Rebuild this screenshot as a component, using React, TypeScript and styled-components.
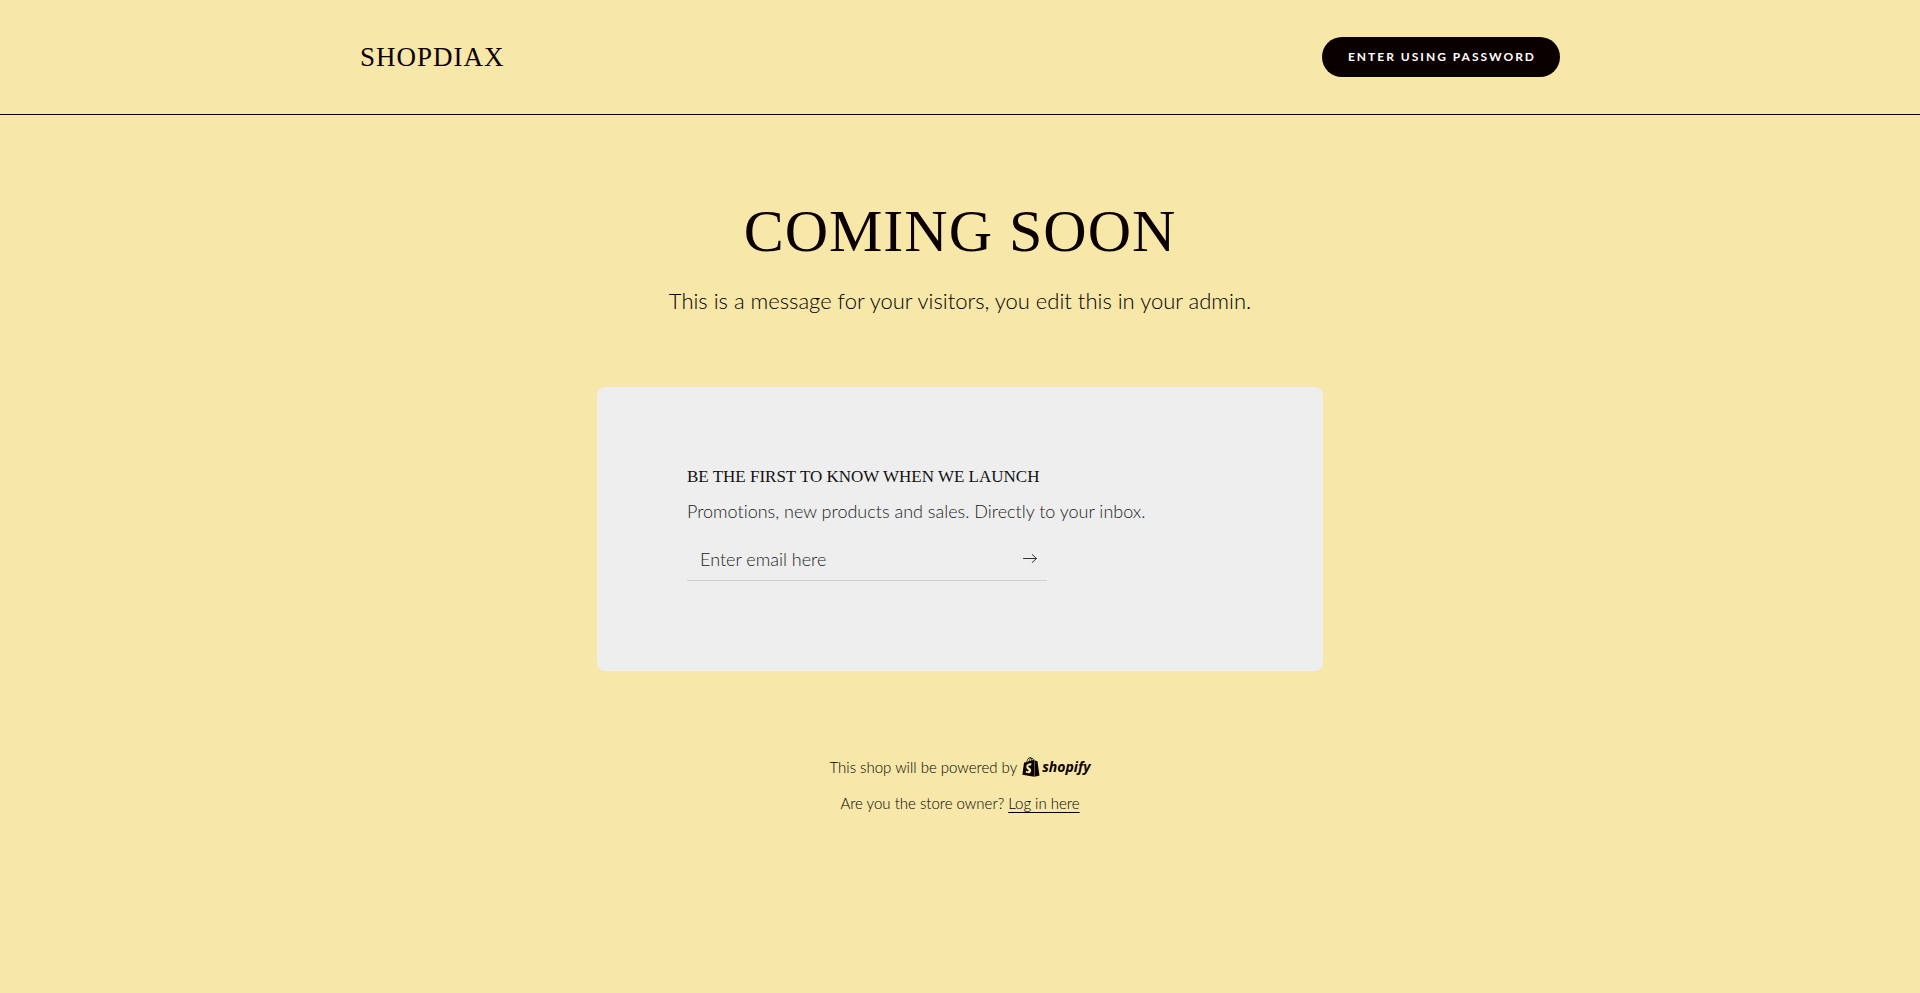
import React from "react";
import styled, { createGlobalStyle } from "styled-components";
import { FaShopify } from "react-icons/fa";

const ink = "#0a0000";
const sand = "#f7e7a9";
const sans = `"Lato", "Liberation Sans", sans-serif`;
const serif = `"Liberation Serif", "Times New Roman", serif`;

const GlobalStyle = createGlobalStyle`
  *, *::before, *::after { box-sizing: border-box; }
  html { background: ${sand}; }
  body {
    margin: 0;
    color: ${ink};
    font-family: ${sans};
    font-size: 18px;
    font-weight: 300;
    font-variant-ligatures: none;
  }
`;

const Header = styled.header`
  border-bottom: 1px solid ${ink};
`;

const HeaderInner = styled.div`
  display: flex;
  align-items: center;
  justify-content: space-between;
  max-width: 1200px;
  min-height: 114px;
  margin: 0 auto;
`;

const Brand = styled.span`
  font-family: ${serif};
  font-size: 27px;
  font-weight: 400;
  line-height: 32px;
  letter-spacing: 1px;
`;

const PasswordButton = styled.button`
  height: 40px;
  padding: 0 24px 0 26px;
  border: 0;
  border-radius: 20px;
  background: ${ink};
  color: #fff;
  font: 700 12px/16px ${sans};
  letter-spacing: 2px;
  cursor: pointer;
`;

const Main = styled.main`
  display: flex;
  flex-direction: column;
  align-items: center;
  padding: 80px 16px 0;
`;

const Title = styled.h1`
  margin: 0;
  font: 400 60px/72px ${serif};
  letter-spacing: 1px;
  text-align: center;
`;

const Message = styled.p`
  margin: 16px 0 0;
  color: #000;
  font-size: 22px;
  line-height: 36px;
  text-align: center;
`;

const Card = styled.section`
  width: 100%;
  max-width: 726px;
  margin-top: 68px;
  padding: 78px 90px 90px;
  border-radius: 8px;
  background: #eee;
`;

const CardTitle = styled.h2`
  margin: 0;
  color: #121212;
  font: 400 17px/24px ${serif};
`;

const CardText = styled.p`
  margin: 8px 0 0;
  color: #222;
  line-height: 28px;
`;

const EmailForm = styled.form`
  display: flex;
  max-width: 360px;
  height: 44px;
  margin-top: 12px;
  border-bottom: 1px solid #cfcfcf;
`;

const EmailInput = styled.input`
  flex: 1;
  min-width: 0;
  padding: 0 0 0 13px;
  border: 0;
  outline: 0;
  background: transparent;
  color: #121212;
  font: 300 18px/24px ${sans};
  &::placeholder { color: #222; opacity: 1; }
`;

const SubmitButton = styled.button`
  display: flex;
  align-items: center;
  justify-content: center;
  width: 34px;
  padding: 0;
  border: 0;
  background: transparent;
  color: #333;
  cursor: pointer;
`;

const Footer = styled.footer`
  display: flex;
  flex-direction: column;
  align-items: center;
  gap: 12px;
  padding: 84px 16px 40px;
  color: #000;
  font-size: 15px;
  line-height: 24px;
`;

const FooterLine = styled.div`
  display: flex;
  align-items: center;
  gap: 4px;
`;

const ShopifyLink = styled.a`
  display: inline-flex;
  align-items: center;
  gap: 1px;
  color: ${ink};
  font: italic 700 14px/24px "Open Sans", sans-serif;
  text-decoration: none;
`;

const LoginLink = styled.a`
  color: #000;
  text-underline-offset: 3px;
`;

export default function App() {
  return (
    <>
      <GlobalStyle />
      <Header>
        <HeaderInner>
          <Brand>SHOPDIAX</Brand>
          <PasswordButton type="button">ENTER USING PASSWORD</PasswordButton>
        </HeaderInner>
      </Header>
      <Main>
        <Title>COMING SOON</Title>
        <Message>This is a message for your visitors, you edit this in your admin.</Message>
        <Card>
          <CardTitle>BE THE FIRST TO KNOW WHEN WE LAUNCH</CardTitle>
          <CardText>Promotions, new products and sales. Directly to your inbox.</CardText>
          <EmailForm onSubmit={(e) => e.preventDefault()}>
            <EmailInput type="email" aria-label="Enter email here" placeholder="Enter email here" />
            <SubmitButton type="submit" aria-label="Subscribe">
              <svg width="14" height="10" viewBox="0 0 14 10" fill="none" stroke="currentColor" strokeLinecap="round" strokeLinejoin="round" aria-hidden="true">
                <path d="M.5 4.5h13M9.2.5l4.2 4-4.2 4" />
              </svg>
            </SubmitButton>
          </EmailForm>
        </Card>
      </Main>
      <Footer>
        <FooterLine>
          <span>This shop will be powered by</span>
          <ShopifyLink href="#shopify">
            <FaShopify size={20} aria-hidden="true" />
            shopify
          </ShopifyLink>
        </FooterLine>
        <FooterLine>
          <span>Are you the store owner?</span>
          <LoginLink href="#login">Log in here</LoginLink>
        </FooterLine>
      </Footer>
    </>
  );
}
